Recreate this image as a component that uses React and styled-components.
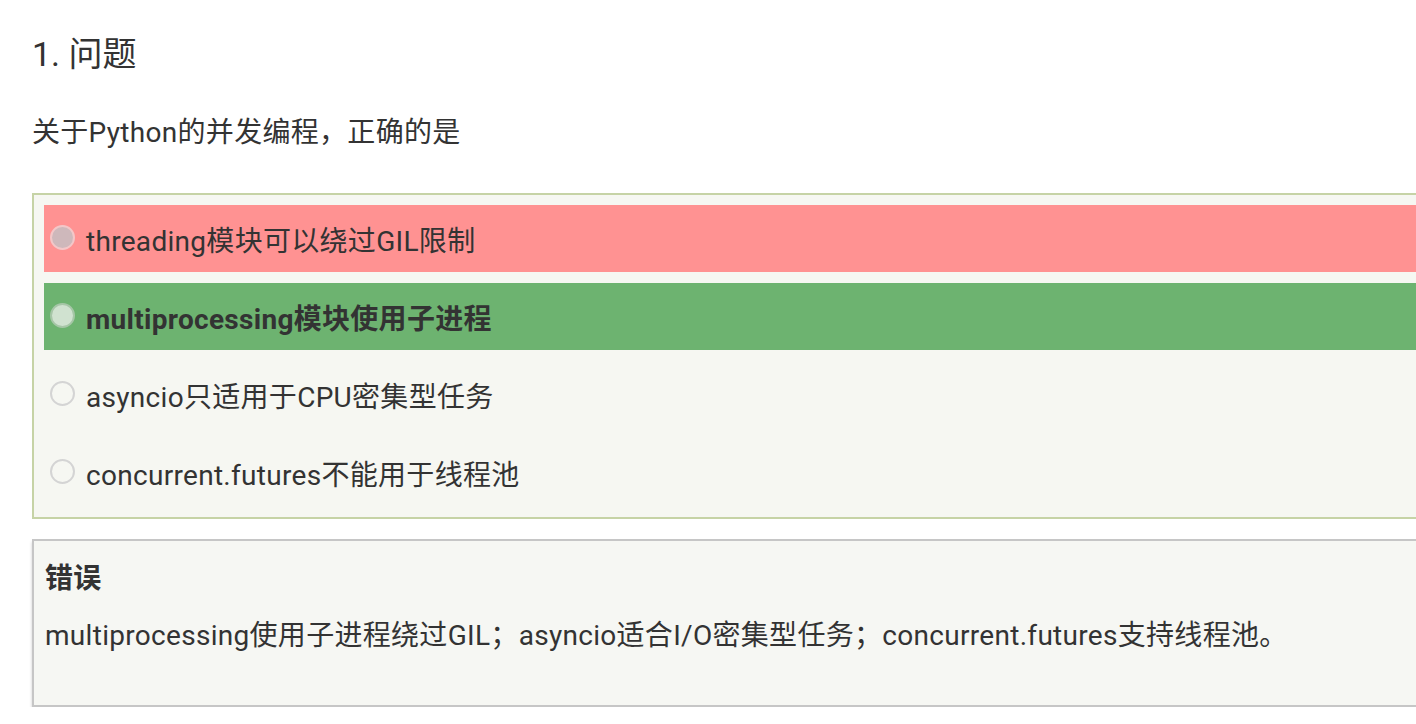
import React from "react";
import styled, { createGlobalStyle } from "styled-components";

const Global = createGlobalStyle`
  html, body {
    margin: 0;
    padding: 0;
    background: #ffffff;
    overflow: hidden;
  }
  body {
    font-family: Roboto, "Noto Sans CJK SC", sans-serif;
    color: #333333;
    letter-spacing: 0.3px;
  }
`;

const Page = styled.div`
  padding: 0 0 0 32px;
  width: 1440px;
`;

const Heading = styled.h2`
  margin: 30px 0 0;
  font-size: 34px;
  line-height: 48px;
  font-weight: 400;
  color: #333333;
  letter-spacing: 0;
`;

const Question = styled.p`
  margin: 34px 0 0;
  font-size: 28px;
  line-height: 42px;
`;

const OptionsBox = styled.div`
  margin-top: 39px;
  border: 2px solid #c6d3a6;
  background: #f6f7f2;
  padding: 10px 10px 0;
  display: flex;
  flex-direction: column;
`;

const rowBg = { wrong: "#ff9292", right: "#6db370", none: "transparent" };

const Option = styled.label`
  display: flex;
  align-items: center;
  height: 67px;
  margin-bottom: 11px;
  padding: 0 0 0 6px;
  gap: 11px;
  background: ${(p) => rowBg[p.$state]};
  font-size: 28px;
  font-weight: ${(p) => (p.$state === "right" ? 700 : 400)};
  color: #333333;
`;

const radioStyles = {
  wrong: { fill: "#ceb8bb", ring: "#f3c7c8" },
  right: { fill: "#d0e2d0", ring: "#a6c6a7" },
  none: { fill: "#f6f7f2", ring: "#d4d4d4" },
};

const Radio = styled.span`
  flex: none;
  width: 25px;
  height: 25px;
  box-sizing: border-box;
  border-radius: 50%;
  background: ${(p) => radioStyles[p.$state].fill};
  border: 2px solid ${(p) => radioStyles[p.$state].ring};
  margin-top: -3px;
`;

const Explain = styled.div`
  margin-top: 20px;
  border: 2px solid #c6c6c6;
  background: #f6f7f3;
  padding: 18px 11px 49px;
  box-shadow: 0 3px 3px rgba(0, 0, 0, 0.2);
`;

const ExplainTitle = styled.div`
  font-size: 28px;
  line-height: 40px;
  font-weight: 700;
`;

const ExplainText = styled.div`
  margin-top: 17px;
  font-size: 28px;
  line-height: 40px;
`;

const options = [
  { text: "threading模块可以绕过GIL限制", state: "wrong" },
  { text: "multiprocessing模块使用子进程", state: "right" },
  { text: "asyncio只适用于CPU密集型任务", state: "none" },
  { text: "concurrent.futures不能用于线程池", state: "none" },
];

export default function App() {
  return (
    <>
      <Global />
      <Page>
        <Heading>1. 问题</Heading>
        <Question>关于Python的并发编程，正确的是</Question>
        <OptionsBox>
          {options.map((o) => (
            <Option key={o.text} $state={o.state}>
              <Radio $state={o.state} />
              <span>{o.text}</span>
            </Option>
          ))}
        </OptionsBox>
        <Explain>
          <ExplainTitle>错误</ExplainTitle>
          <ExplainText>
            multiprocessing使用子进程绕过GIL；asyncio适合I/O密集型任务；concurrent.futures支持线程池。
          </ExplainText>
        </Explain>
      </Page>
    </>
  );
}
